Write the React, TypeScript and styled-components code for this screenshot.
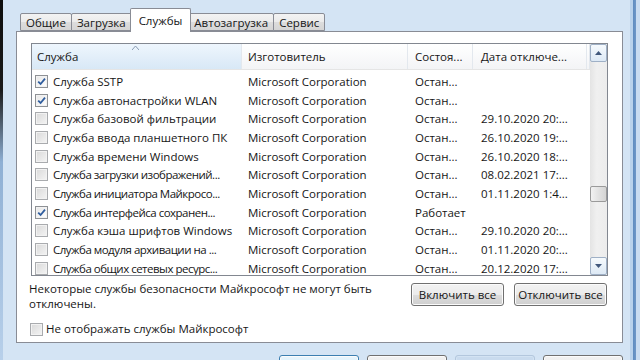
import styled, { createGlobalStyle } from 'styled-components';

const GlobalStyle = createGlobalStyle`
  html, body {
    margin: 0;
    padding: 0;
  }
  body {
    width: 640px;
    height: 360px;
    overflow: hidden;
    font-family: 'Open Sans', 'Noto Sans', sans-serif;
    font-size: 11.5px;
    color: #161616;
  }
`;

type Service = {
  name: string;
  checked: boolean;
  state: string;
  date: string;
};

const services: Service[] = [
  { name: 'Служба SSTP', checked: true, state: 'Остан...', date: '' },
  { name: 'Служба автонастройки WLAN', checked: true, state: 'Остан...', date: '' },
  { name: 'Служба базовой фильтрации', checked: false, state: 'Остан...', date: '29.10.2020 20:...' },
  { name: 'Служба ввода планшетного ПК', checked: false, state: 'Остан...', date: '26.10.2020 19:...' },
  { name: 'Служба времени Windows', checked: false, state: 'Остан...', date: '26.10.2020 18:...' },
  { name: 'Служба загрузки изображений...', checked: false, state: 'Остан...', date: '08.02.2021 17:...' },
  { name: 'Служба инициатора Майкросо...', checked: false, state: 'Остан...', date: '01.11.2020 1:4...' },
  { name: 'Служба интерфейса сохранен...', checked: true, state: 'Работает', date: '' },
  { name: 'Служба кэша шрифтов Windows', checked: false, state: 'Остан...', date: '29.10.2020 20:...' },
  { name: 'Служба модуля архивации на ...', checked: false, state: 'Остан...', date: '01.11.2020 20:...' },
  { name: 'Служба общих сетевых ресурс...', checked: false, state: 'Остан...', date: '20.12.2020 17:...' },
];

const tabs = ['Общие', 'Загрузка', 'Службы', 'Автозагрузка', 'Сервис'];
const columns = '210px 166px 65px 114px 1fr';

// scroll position of the list, 0..1
const scrollRatio = 0.69;

function CheckBox({ checked }: { checked: boolean }) {
  return (
    <Box $checked={checked}>
      {checked && (
        <svg width="9" height="9" viewBox="0 0 9 9">
          <path d="M1.2 4.6 L3.6 7 L8 1.6" fill="none" stroke="#2f5d9e" strokeWidth="1.8" />
        </svg>
      )}
    </Box>
  );
}

function Arrow({ down }: { down?: boolean }) {
  return (
    <svg width="7" height="4" viewBox="0 0 7 4">
      <path d={down ? 'M0 0 H7 L3.5 4 Z' : 'M0 4 H7 L3.5 0 Z'} fill="#41587c" />
    </svg>
  );
}

export default function App() {
  const trackHeight = 195;
  const thumbHeight = 16;

  return (
    <Window>
      <GlobalStyle />
      <LeftEdge />
      <Client>
        <TabStrip>
          {tabs.map((t) => (
            <Tab key={t} $active={t === 'Службы'}>
              {t}
            </Tab>
          ))}
        </TabStrip>
        <Panel>
          <ListBox>
            <Table>
              <HeaderRow>
                <HeaderCell $sorted $pad={5}>
                  <SortMark>
                    <svg width="7" height="4" viewBox="0 0 7 4">
                      <path d="M0 4 L3.5 0 L7 4" fill="none" stroke="#8a9bb3" strokeWidth="1" />
                    </svg>
                  </SortMark>
                  Служба
                </HeaderCell>
                <HeaderCell $pad={6}>Изготовитель</HeaderCell>
                <HeaderCell $pad={7}>Состоя...</HeaderCell>
                <HeaderCell $pad={8}>Дата отключе...</HeaderCell>
                <HeaderCell $pad={0} />
              </HeaderRow>
              <Rows>
                {services.map((s) => (
                  <Row key={s.name}>
                    <NameCell>
                      <CheckBox checked={s.checked} />
                      <Name $ellipsized={s.name.endsWith('...')}>{s.name}</Name>
                    </NameCell>
                    <Cell $pad={6}>Microsoft Corporation</Cell>
                    <Cell $pad={7}>{s.state}</Cell>
                    <Cell $pad={8}>{s.date}</Cell>
                  </Row>
                ))}
              </Rows>
            </Table>
            <ScrollBar>
              <ScrollButton>
                <Arrow />
              </ScrollButton>
              <Track>
                <Thumb style={{ top: Math.round((trackHeight - thumbHeight) * scrollRatio) }} />
              </Track>
              <ScrollButton>
                <Arrow down />
              </ScrollButton>
            </ScrollBar>
          </ListBox>

          <NoticeRow>
            <Notice>Некоторые службы безопасности Майкрософт не могут быть отключены.</Notice>
            <ActionButton>Включить все</ActionButton>
            <ActionButton>Отключить все</ActionButton>
          </NoticeRow>

          <HideRow>
            <CheckBox checked={false} />
            Не отображать службы Майкрософт
          </HideRow>
        </Panel>
        <DialogButtons>
          <DialogButton $kind="default" aria-label="ОК" />
          <DialogButton aria-label="Отмена" />
          <DialogButton $kind="disabled" aria-label="Применить" />
          <DialogButton aria-label="Справка" />
        </DialogButtons>
      </Client>
      <RightEdge />
    </Window>
  );
}

const Window = styled.div`
  display: flex;
  width: 640px;
  height: 360px;
  overflow: hidden;
  background: #d4e4f4;
`;

const LeftEdge = styled.div`
  width: 3px;
  flex: none;
  background: linear-gradient(#0d0d0d 0, #1a1a1a 25%, #8fb0d4 45%, #b8d0ea 100%);
`;

const RightEdge = styled.div`
  width: 10px;
  flex: none;
  background: linear-gradient(to right, #b9d2ec 0, #b9d2ec 3px, #5f8cc0 3px, #6f98c8 6px, #c9dcf1 6px);
`;

const Client = styled.div`
  width: 627px;
  flex: none;
  box-sizing: border-box;
  padding: 8px 7px 0 13px;
  display: flex;
  flex-direction: column;
`;

const TabStrip = styled.div`
  height: 23px;
  flex: none;
  display: flex;
  align-items: flex-end;
  padding-left: 5px;
  position: relative;
  z-index: 1;
`;

const Tab = styled.div<{ $active?: boolean }>`
  box-sizing: border-box;
  height: ${(p) => (p.$active ? '24px' : '18px')};
  margin: 0 ${(p) => (p.$active ? '-2px' : '0')} ${(p) => (p.$active ? '-1px' : '0')};
  padding: 0 ${(p) => (p.$active ? '8px' : '5px')};
  margin-left: ${(p) => (p.$active ? '-2px' : '-1px')};
  display: flex;
  align-items: center;
  position: relative;
  z-index: ${(p) => (p.$active ? 2 : 1)};
  border: 1px solid #898c95;
  border-bottom: ${(p) => (p.$active ? 'none' : '1px solid #898c95')};
  border-radius: 2px 2px 0 0;
  background: ${(p) =>
    p.$active ? '#ffffff' : 'linear-gradient(#f3f3f3 0%, #ebebeb 50%, #dddddd 51%, #d5d5d5 100%)'};
  white-space: nowrap;
`;

const Panel = styled.div`
  height: 312px;
  flex: none;
  box-sizing: border-box;
  border: 1px solid #898c95;
  background: #ffffff;
  padding: 11px 14px 0 12px;
  display: flex;
  flex-direction: column;
`;

const ListBox = styled.div`
  height: 233px;
  flex: none;
  margin-left: 2px;
  box-sizing: border-box;
  border: 1px solid #828790;
  display: flex;
  overflow: hidden;
`;

const Table = styled.div`
  flex: 1;
  display: flex;
  flex-direction: column;
  overflow: hidden;
`;

const HeaderRow = styled.div`
  height: 25px;
  flex: none;
  display: grid;
  grid-template-columns: ${columns};
  border-bottom: 1px solid #e5e5e5;
`;

const HeaderCell = styled.div<{ $sorted?: boolean; $pad: number }>`
  position: relative;
  display: flex;
  align-items: center;
  padding-left: ${(p) => p.$pad}px;
  border-right: 1px solid #e3e8ee;
  background: ${(p) =>
    p.$sorted ? 'linear-gradient(#eef6fd, #d8e8f6)' : 'linear-gradient(#ffffff, #f3f4f6)'};
  white-space: nowrap;
  overflow: hidden;
`;

const SortMark = styled.span`
  position: absolute;
  top: 2px;
  left: 100px;
  line-height: 0;
`;

const Rows = styled.div`
  padding-top: 2px;
`;

const Row = styled.div`
  height: 18.7px;
  display: grid;
  grid-template-columns: ${columns};
  align-items: center;
  white-space: nowrap;
`;

const Cell = styled.div<{ $pad: number }>`
  padding-left: ${(p) => p.$pad}px;
  overflow: hidden;
`;

const NameCell = styled.div`
  display: flex;
  align-items: center;
  gap: 5px;
  padding-left: 3px;
  overflow: hidden;
`;

// names that Windows cut with an ellipsis fill the column exactly
const Name = styled.span<{ $ellipsized: boolean }>`
  letter-spacing: ${(p) => (p.$ellipsized ? '-0.5px' : '0')};
  white-space: nowrap;
`;

const Box = styled.span<{ $checked: boolean }>`
  width: 13px;
  height: 13px;
  flex: none;
  box-sizing: border-box;
  display: inline-flex;
  align-items: center;
  justify-content: center;
  border: 1px solid ${(p) => (p.$checked ? '#8e9195' : '#a9abae')};
  background: ${(p) =>
    p.$checked ? 'linear-gradient(135deg, #e6e6e6, #ffffff)' : 'linear-gradient(135deg, #d9d9d9, #f4f4f4)'};
  box-shadow: inset 0 0 0 1px #f2f2f2;
`;

const ScrollBar = styled.div`
  width: 17px;
  flex: none;
  display: flex;
  flex-direction: column;
  background: linear-gradient(to right, #e4e4e4, #f0f0f0 40%, #ececec);
`;

const ScrollButton = styled.div`
  height: 18px;
  flex: none;
  box-sizing: border-box;
  display: flex;
  align-items: center;
  justify-content: center;
  border: 1px solid #9fb0c6;
  border-radius: 2px;
  background: linear-gradient(#f6fafd, #dde9f5);
`;

const Track = styled.div`
  flex: 1;
  position: relative;
`;

const Thumb = styled.div`
  position: absolute;
  left: 0;
  right: 0;
  height: 16px;
  box-sizing: border-box;
  border: 1px solid #9a9a9a;
  border-radius: 2px;
  background: linear-gradient(to right, #f2f2f2, #e2e2e2 50%, #d4d4d4);
`;

const NoticeRow = styled.div`
  display: flex;
  align-items: flex-start;
  gap: 10px;
  margin-top: 5px;
  padding-right: 1px;
`;

const Notice = styled.div`
  flex: 1;
  max-width: 365px;
  line-height: 15px;
  margin-right: auto;
`;

const ActionButton = styled.button`
  width: 93px;
  height: 23px;
  margin-top: 2px;
  box-sizing: border-box;
  padding: 0;
  font: inherit;
  color: #161616;
  border: 1px solid #707070;
  border-radius: 3px;
  background: linear-gradient(#f2f2f2 0%, #ebebeb 50%, #dddddd 51%, #cfcfcf 100%);
  box-shadow: inset 0 0 0 1px #fbfbfb;
`;

const HideRow = styled.label`
  display: flex;
  align-items: center;
  gap: 3px;
  margin-top: 9px;
  margin-left: 1px;
  line-height: 18px;
`;

const DialogButtons = styled.div`
  display: flex;
  justify-content: flex-end;
  gap: 8px;
  margin-top: 12px;
`;

const DialogButton = styled.button<{ $kind?: 'default' | 'disabled' }>`
  width: 80px;
  height: 23px;
  flex: none;
  padding: 0;
  border-radius: 3px;
  border: 1px solid
    ${(p) => (p.$kind === 'default' ? '#3c7fb1' : p.$kind === 'disabled' ? '#b3c7dd' : '#707070')};
  background: ${(p) =>
    p.$kind === 'default'
      ? 'linear-gradient(#eaf6fd, #d9f0fc 50%, #bee6fd 51%, #a7d9f5)'
      : p.$kind === 'disabled'
        ? '#c9dbee'
        : 'linear-gradient(#f2f2f2 0%, #ebebeb 50%, #dddddd 51%, #cfcfcf 100%)'};
  box-shadow: inset 0 0 0 1px ${(p) => (p.$kind === 'disabled' ? '#d3e3f3' : '#fbfbfb')};
`;
